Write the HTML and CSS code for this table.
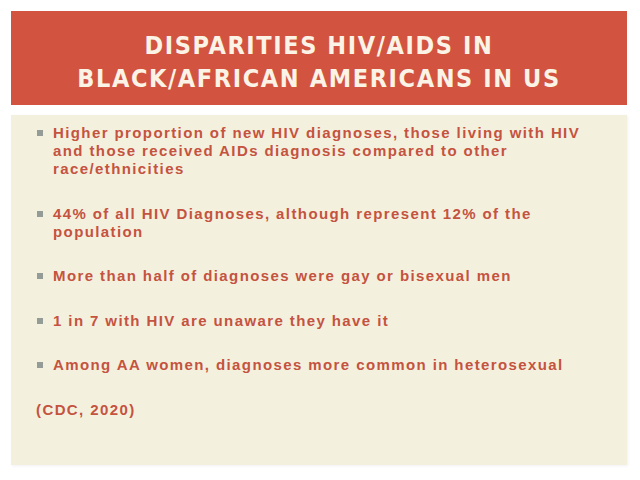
FILE: index.html
```html
<!DOCTYPE html>
<html>
<head>
<meta charset="utf-8">
<link rel="stylesheet" href="styles.css">
</head>
<body>
<div class="slide">
  <div class="title">
    <div class="title-line">DISPARITIES HIV/AIDS IN</div>
    <div class="title-line">BLACK/AFRICAN AMERICANS IN US</div>
  </div>
  <div class="content">
    <ul class="bullets">
      <li>Higher proportion of new HIV diagnoses, those living with HIV and those received AIDs diagnosis compared to other race/ethnicities</li>
      <li>44% of all HIV Diagnoses, although represent 12% of the population</li>
      <li>More than half of diagnoses were gay or bisexual men</li>
      <li>1 in 7 with HIV are unaware they have it</li>
      <li>Among AA women, diagnoses more common in heterosexual</li>
    </ul>
    <p class="cite">(CDC, 2020)</p>
  </div>
</div>
</body>
</html>
```
FILE: styles.css
```css
html, body {
  margin: 0;
  padding: 0;
  background: #ffffff;
}
.slide {
  width: 640px;
  height: 480px;
  box-sizing: border-box;
  padding: 11px 13px 15px 11px;
  display: flex;
  flex-direction: column;
  gap: 10px;
}
.title {
  height: 94px;
  background: #d2533f;
  display: flex;
  flex-direction: column;
  justify-content: center;
  align-items: center;
  color: #fbf3e6;
  font-family: "DejaVu Sans Condensed", "Liberation Sans Narrow", sans-serif;
  font-weight: bold;
  font-size: 25px;
  letter-spacing: 1.6px;
  line-height: 33px;
  padding-top: 8px;
  box-sizing: border-box;
}
.content {
  flex: 1;
  background: #f4f0de;
  box-shadow: 1px 1px 3px rgba(0,0,0,0.06);
  padding: 9px 30px 0 25px;
  font-family: "Liberation Sans", Arial, sans-serif;
  font-weight: bold;
  font-size: 15px;
  line-height: 18px;
  letter-spacing: 1.4px;
  color: #c4533f;
}
.bullets {
  list-style: none;
  margin: 0;
  padding: 0;
}
.bullets li {
  position: relative;
  padding-left: 17px;
  margin-bottom: 26.6px;
}
.bullets li::before {
  content: "";
  position: absolute;
  left: 1px;
  top: 6px;
  width: 6px;
  height: 6px;
  background: #939c97;
}
.cite {
  margin: 0;
}
```
